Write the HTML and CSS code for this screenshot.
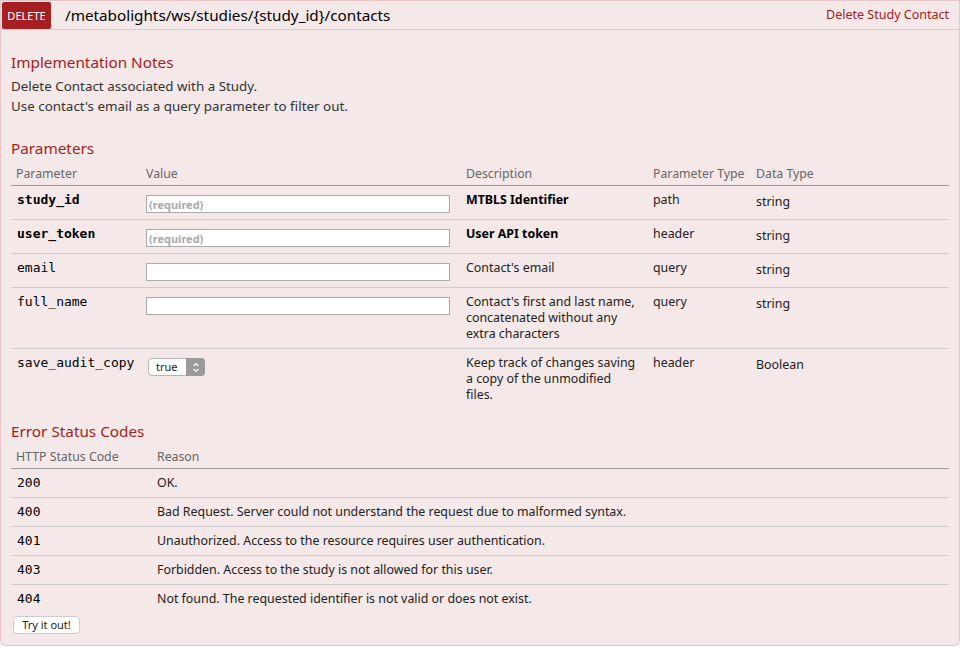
FILE: index.html
```html
<!DOCTYPE html>
<html>
<head>
<meta charset="utf-8">
<link rel="stylesheet" href="styles.css">
</head>
<body>
<div class="op">
  <div class="op-head">
    <span class="verb">DELETE</span>
    <span class="path">/metabolights/ws/studies/{study_id}/contacts</span>
    <span class="summary">Delete Study Contact</span>
  </div>
  <div class="op-body">
    <h4 class="first">Implementation Notes</h4>
    <p class="notes">Delete Contact associated with a Study.<br>Use contact's email as a query parameter to filter out.</p>

    <h4>Parameters</h4>
    <table class="params">
      <colgroup>
        <col class="c1"><col class="c2"><col class="c3"><col class="c4"><col class="c5">
      </colgroup>
      <thead>
        <tr><th>Parameter</th><th>Value</th><th>Description</th><th>Parameter Type</th><th>Data Type</th></tr>
      </thead>
      <tbody>
        <tr>
          <td class="code req">study_id</td>
          <td><input class="field" type="text" placeholder="(required)"></td>
          <td class="desc strong">MTBLS Identifier</td>
          <td>path</td>
          <td class="dtype">string</td>
        </tr>
        <tr>
          <td class="code req">user_token</td>
          <td><input class="field" type="text" placeholder="(required)"></td>
          <td class="desc strong">User API token</td>
          <td>header</td>
          <td class="dtype">string</td>
        </tr>
        <tr>
          <td class="code">email</td>
          <td><input class="field" type="text"></td>
          <td class="desc">Contact's email</td>
          <td>query</td>
          <td class="dtype">string</td>
        </tr>
        <tr>
          <td class="code">full_name</td>
          <td><input class="field" type="text"></td>
          <td class="desc">Contact's first and last name, concatenated without any extra characters</td>
          <td>query</td>
          <td class="dtype">string</td>
        </tr>
        <tr class="last">
          <td class="code">save_audit_copy</td>
          <td>
            <span class="select-wrap">
              <select class="sel"><option>true</option><option>false</option></select>
              <span class="sel-arrow"><svg width="8" height="11" viewBox="0 0 8 11"><path d="M1.5 4 L4 1.5 L6.5 4 M1.5 7 L4 9.5 L6.5 7" fill="none" stroke="#fff" stroke-width="1.2"/></svg></span>
            </span>
          </td>
          <td class="desc">Keep track of changes saving a copy of the unmodified files.</td>
          <td>header</td>
          <td class="dtype">Boolean</td>
        </tr>
      </tbody>
    </table>

    <h4 class="err">Error Status Codes</h4>
    <table class="codes">
      <colgroup><col class="e1"><col class="e2"></colgroup>
      <thead>
        <tr><th>HTTP Status Code</th><th>Reason</th></tr>
      </thead>
      <tbody>
        <tr><td class="code">200</td><td>OK.</td></tr>
        <tr><td class="code">400</td><td>Bad Request. Server could not understand the request due to malformed syntax.</td></tr>
        <tr><td class="code">401</td><td>Unauthorized. Access to the resource requires user authentication.</td></tr>
        <tr><td class="code">403</td><td>Forbidden. Access to the study is not allowed for this user.</td></tr>
        <tr class="last"><td class="code">404</td><td>Not found. The requested identifier is not valid or does not exist.</td></tr>
      </tbody>
    </table>
    <button class="try">Try it out!</button>
  </div>
</div>
</body>
</html>
```
FILE: styles.css
```css
* { box-sizing: border-box; }
html, body { margin: 0; padding: 0; background: #fff; }
body {
  font-family: "Noto Sans", "Open Sans", sans-serif;
  font-size: 13px;
  color: #333;
}
.op { width: 960px; }
.op-head {
  height: 30px;
  display: flex;
  align-items: center;
  background: #f5e8e8;
  border: 1px solid #e8c6c7;
  padding: 0 10px 0 1px;
}
.verb {
  background: #a41e22;
  color: #fff;
  font-size: 11px;
  height: 27px;
  width: 49px;
  display: flex;
  align-items: center;
  justify-content: center;
  border-radius: 2px;
}
.path {
  font-size: 15.25px;
  color: #000;
  margin-left: 14px;
  flex: 1;
  line-height: 20px;
}
.summary {
  font-size: 12.5px;
  color: #a41e22;
  line-height: 16px;
}
.op-body {
  background: #f5e8e8;
  border: 1px solid #e8c6c7;
  border-top: 0;
  border-radius: 0 0 6px 6px;
  padding: 22px 10px 12px 10px;
  height: 616px;
}
h4 {
  margin: 22px 0 0 0;
  font-size: 15.3px;
  line-height: 20px;
  font-weight: normal;
  color: #a41e22;
}
h4.first { margin-top: 0; }
h4.err { margin-top: 12px; }
.notes {
  margin: 4px 0 0 0;
  font-size: 13.4px;
  line-height: 20px;
  color: #333;
}
table {
  width: 100%;
  border-collapse: collapse;
  table-layout: fixed;
}
.c1 { width: 130px; }
.c2 { width: 320px; }
.c3 { width: 187px; }
.c4 { width: 103px; }
.c5 { width: 198px; }
.e1 { width: 141px; }
th {
  text-align: left;
  font-weight: normal;
  font-size: 12.3px;
  color: #666;
  line-height: 16px;
  padding: 8px 5px 3px 5px;
  border-bottom: 1px solid #999;
}
td {
  vertical-align: top;
  font-size: 12.4px;
  line-height: 16px;
  padding: 6px 5px 6px 5px;
  border-bottom: 1px solid #ccc;
  color: #222;
}
tr.last td { border-bottom: 0; }
td.code {
  font-family: "DejaVu Sans Mono", monospace;
  font-size: 13px;
  color: #000;
  padding-left: 6px;
}
td.desc { padding-right: 12px; }
.req { font-weight: bold; }
.strong { font-weight: bold; color: #000; }
td.dtype { padding-top: 8px; }
.field {
  display: block;
  width: 304px;
  height: 18px;
  margin: 3px 0 0 0;
  padding: 0 2px;
  border: 1px solid #aaa;
  background: #fff;
  font-family: "Noto Sans", sans-serif;
  font-size: 11px;
  font-weight: bold;
}
.field::placeholder { color: #aaa; }
.select-wrap {
  position: relative;
  display: inline-block;
  margin: 3px 0 0 2px;
  width: 57px;
  height: 18px;
}
.sel {
  appearance: none;
  -webkit-appearance: none;
  width: 57px;
  height: 18px;
  border: 1px solid #b5b5b5;
  border-radius: 4px;
  background: #fff;
  font-family: "Noto Sans", sans-serif;
  font-size: 11px;
  color: #222;
  padding: 0 0 0 7px;
  margin: 0;
  line-height: 16px;
}
.sel-arrow {
  position: absolute;
  right: 0;
  top: 0;
  width: 19px;
  height: 18px;
  background: #9a9a9a;
  border-radius: 0 4px 4px 0;
  display: flex;
  align-items: center;
  justify-content: center;
  pointer-events: none;
}
.try {
  margin: 3px 0 0 2px;
  height: 18px;
  width: 67px;
  padding: 0;
  border: 1px solid #ccc;
  border-radius: 4px;
  background: #fff;
  font-family: "Noto Sans", sans-serif;
  font-size: 11px;
  color: #222;
  line-height: 16px;
}
```
